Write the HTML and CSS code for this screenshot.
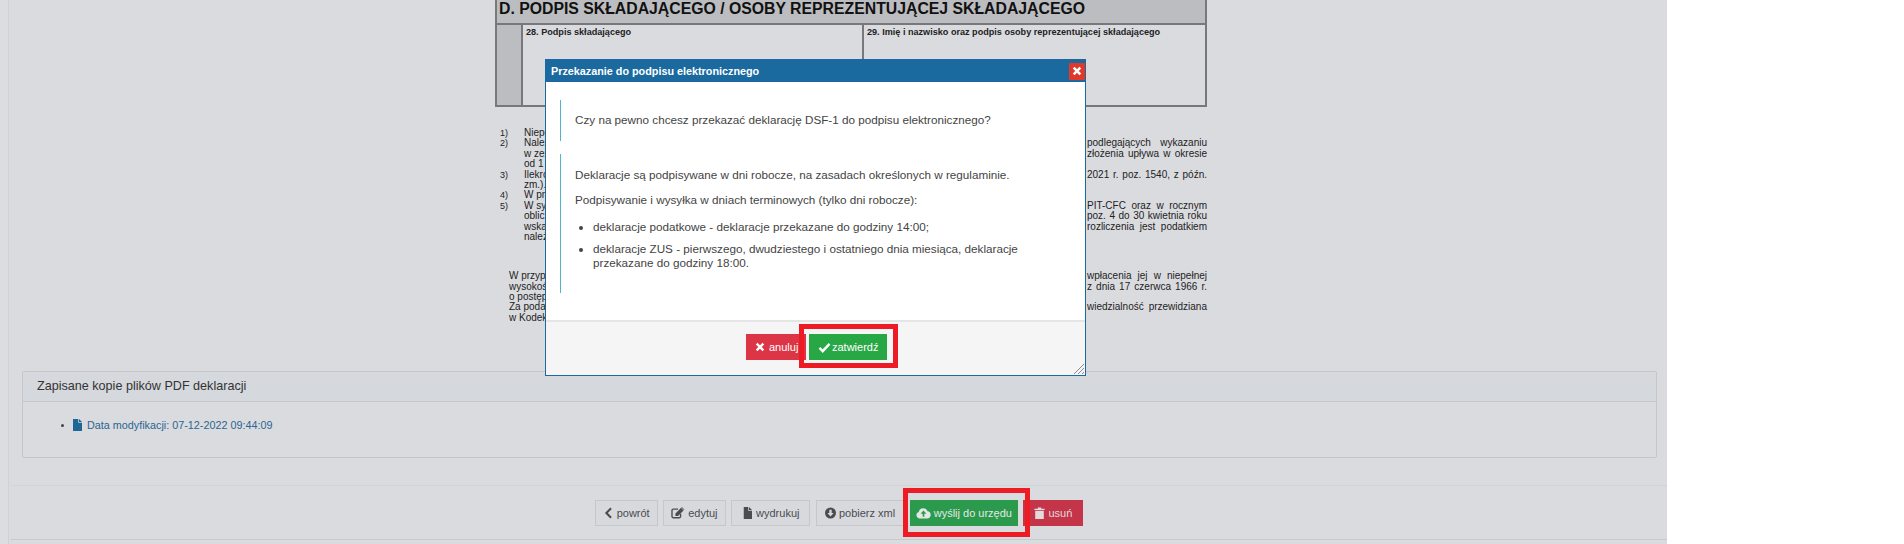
FILE: index.html
```html
<!DOCTYPE html>
<html lang="pl">
<head>
<meta charset="utf-8">
<title>Przekazanie do podpisu elektronicznego</title>
<link rel="stylesheet" href="styles.css">
</head>
<body>
<div class="app">
  <div class="content">
    <div class="rail"></div>
    <main class="main">
      <section class="doc">
        <div class="form">
          <h2 class="form-title">D. PODPIS SKŁADAJĄCEGO / OSOBY REPREZENTUJĄCEJ SKŁADAJĄCEGO</h2>
          <div class="form-body">
            <div class="form-side"></div>
            <div class="form-cell form-cell-a">28. Podpis składającego</div>
            <div class="form-cell">29. Imię i nazwisko oraz podpis osoby reprezentującej składającego</div>
          </div>
        </div>
        <div class="notes">
          <div class="line"><span class="num">1)</span><span class="l">Niepotrzebne skreślić.</span></div>
          <div class="line"><span class="num">2)</span><span class="l">Należy wskazać</span><span class="r">podlegających wykazaniu</span></div>
          <div class="line"><span class="num"></span><span class="l">w zeznaniu</span><span class="r">złożenia upływa w okresie</span></div>
          <div class="line"><span class="num"></span><span class="l">od 1 stycznia</span></div>
          <div class="line"><span class="num">3)</span><span class="l">Ilekroć mowa</span><span class="r">2021 r. poz. 1540, z późn.</span></div>
          <div class="line"><span class="num"></span><span class="l">zm.).</span></div>
          <div class="line"><span class="num">4)</span><span class="l">W przypadku</span></div>
          <div class="line"><span class="num">5)</span><span class="l">W sytuacji</span><span class="r">PIT-CFC oraz w rocznym</span></div>
          <div class="line"><span class="num"></span><span class="l">obliczeniu</span><span class="r">poz. 4 do 30 kwietnia roku</span></div>
          <div class="line"><span class="num"></span><span class="l">wskazanego</span><span class="r">rozliczenia jest podatkiem</span></div>
          <div class="line"><span class="num"></span><span class="l">należnym.</span></div>
          <div class="para">
            <div class="line"><span class="l">W przypadku</span><span class="r">wpłacenia jej w niepełnej</span></div>
            <div class="line"><span class="l">wysokości</span><span class="r">z dnia 17 czerwca 1966 r.</span></div>
            <div class="line"><span class="l">o postępowaniu</span></div>
            <div class="line"><span class="l">Za podanie</span><span class="r">wiedzialność przewidziana</span></div>
            <div class="line"><span class="l">w Kodeksie</span></div>
          </div>
        </div>
      </section>

      <section class="panel">
        <h3 class="panel-head">Zapisane kopie plików PDF deklaracji</h3>
        <ul class="panel-list">
          <li><a class="file-link"><svg class="ico-file" viewBox="0 0 12 16"><path d="M0 0h7v5h5v11H0z"/><path d="M8 0l4 4H8z"/></svg>Data modyfikacji: 07-12-2022 09:44:09</a></li>
        </ul>
      </section>

      <div class="actions">
        <a class="btn btn-plain"><svg class="ico" viewBox="0 0 12 14"><path d="M9 1.500L3.500 7 9 12.500" fill="none" stroke="currentColor" stroke-width="2.400"/></svg>powrót</a>
        <a class="btn btn-plain"><svg class="ico ico-wide" viewBox="0 0 16 14"><path d="M11 8v3a1.500 1.500 0 0 1-1.500 1.500h-7A1.500 1.500 0 0 1 1 11V4a1.500 1.500 0 0 1 1.500-1.500H8" fill="none" stroke="currentColor" stroke-width="1.600"/><path d="M5 7.500L11.500 1l3 3L8 10.500H5zM12.500 0l3 3-.5.5-3-3z"/></svg>edytuj</a>
        <a class="btn btn-plain btn-roomy"><svg class="ico" viewBox="0 0 12 16"><path d="M1 0h6v5h5v11H1z"/><path d="M8 0l4 4H8z"/></svg>wydrukuj</a>
        <a class="btn btn-plain btn-xml"><svg class="ico" viewBox="0 0 14 14"><path fill-rule="evenodd" d="M7 0a7 7 0 1 1 0 14A7 7 0 0 1 7 0zM5.500 3v4H3l4 4.500L11 7H8.500V3z"/></svg>pobierz xml</a>
        <a class="btn btn-send"><svg class="ico ico-cloud" viewBox="0 0 18 14"><path fill-rule="evenodd" d="M4.500 13.500A4 4 0 0 1 3.300 5.700 5.500 5.500 0 0 1 13.800 4.800 4.400 4.400 0 0 1 14 13.500zM9 4L5.500 8H8v3.500h2V8h2.500z"/></svg>wyślij do urzędu</a>
        <a class="btn btn-del"><svg class="ico" viewBox="0 0 12 14"><path d="M0 2h4V.5h4V2h4v1.500H0zM1 4.500h10V14H1z"/></svg>usuń</a>
      </div>
    </main>
  </div>

  <div class="frame frame-modal"></div>

  <div class="modal" role="dialog">
    <header class="modal-head">
      <span>Przekazanie do podpisu elektronicznego</span>
      <span class="modal-close"><svg class="close-ico" viewBox="0 0 12 12"><path d="M2 2l8 8M10 2l-8 8" fill="none" stroke="#fff" stroke-width="3"/></svg></span>
    </header>
    <div class="modal-body">
      <div class="callout callout-a">Czy na pewno chcesz przekazać deklarację DSF-1 do podpisu elektronicznego?</div>
      <div class="callout callout-b">
        <p>Deklaracje są podpisywane w dni robocze, na zasadach określonych w regulaminie.</p>
        <p>Podpisywanie i wysyłka w dniach terminowych (tylko dni robocze):</p>
        <ul>
          <li>deklaracje podatkowe - deklaracje przekazane do godziny 14:00;</li>
          <li>deklaracje ZUS - pierwszego, dwudziestego i ostatniego dnia miesiąca, deklaracje przekazane do godziny 18:00.</li>
        </ul>
      </div>
    </div>
    <footer class="modal-foot">
      <a class="mbtn mbtn-cancel"><svg class="mico" viewBox="0 0 12 12"><path d="M2 2l8 8M10 2l-8 8" fill="none" stroke="currentColor" stroke-width="2.800"/></svg>anuluj</a>
      <a class="mbtn mbtn-ok"><svg class="mico mico-check" viewBox="0 0 14 12"><path d="M1.500 6.500l3.500 3.500 7.500-8" fill="none" stroke="currentColor" stroke-width="2.600"/></svg>zatwierdź</a>
      <svg class="grip" viewBox="0 0 12 12"><path d="M11 1L1 11M11 5l-6 6M11 9l-2 2" fill="none" stroke="#8b8b8b" stroke-width="1"/></svg>
    </footer>
  </div>

  <div class="frame frame-send"></div>
</div>
</body>
</html>
```
FILE: styles.css
```css
* { box-sizing: border-box; }
html, body { margin: 0; padding: 0; background: #fff; }
body { font-family: "Liberation Sans", Arial, sans-serif; color: #333; }

.app { position: relative; width: 1904px; height: 544px; overflow: hidden; background: #fff; }
.content { display: flex; width: 1667px; height: 544px; background: #dadbdf; }
.rail { flex: 0 0 9px; background: #dcdde1; border-right: 1px solid #d0d1d5; }
.main { flex: 1; min-width: 0; }

/* scanned declaration */
.doc { margin-left: 486px; width: 712px; height: 371px; color: #222; }
.form { height: 107px; border: 2px solid #77787b; border-top: 0; }
.form-title { margin: 0; height: 25px; padding: 0 0 0 2px; background: #bcbdc0; border-bottom: 2px solid #77787b; font-size: 15.800px; line-height: 17px; font-weight: 700; color: #111; white-space: nowrap; }
.form-body { display: grid; grid-template-columns: 26px 341px 1fr; height: 80px; }
.form-side { background: #bcbdc0; border-right: 2px solid #77787b; }
.form-cell { padding: 2px 0 0 3px; font-size: 9.100px; line-height: 10px; font-weight: 700; color: #222; white-space: nowrap; }
.form-cell-a { border-right: 2px solid #77787b; }

.notes { padding-top: 21px; font-size: 10px; line-height: 10.400px; }
.line { display: flex; justify-content: space-between; height: 10.400px; white-space: nowrap; }
.num { flex: 0 0 29px; padding-left: 5px; font-size: 9px; }
.l { flex: 1; }
.r { flex: 0 0 120px; text-align: justify; text-align-last: justify; white-space: normal; }
.para { margin-top: 29px; padding-left: 14px; }

/* saved files panel */
.panel { margin: 0 10px 0 13px; height: 87px; border: 1px solid #c5c6ca; border-radius: 2px; }
.panel-head { margin: 0; height: 30px; padding: 0 14px; background: #d5d8dc; border-bottom: 1px solid #c5c6ca; font-size: 12.600px; font-weight: 400; line-height: 29px; color: #333; }
.panel-list { margin: 0; padding: 16px 0 0 38px; font-size: 10.800px; line-height: 14px; list-style: none; }
.panel-list li { display: flex; align-items: center; gap: 9px; }
.panel-list li::before { content: ""; width: 3px; height: 3px; border-radius: 50%; background: #444; }
.file-link { display: inline-flex; align-items: center; color: #2a6592; }
.ico-file { width: 9px; height: 12px; margin-right: 5px; fill: #1d6696; }

/* action bar */
.actions { display: flex; justify-content: center; gap: 5.500px; margin: 27px 0 0 2px; height: 55px; padding-top: 14px; border-top: 1px solid #d2d3d7; border-bottom: 1px solid #c9cace; }
.btn { display: inline-flex; align-items: center; height: 26px; padding: 0 7px; border: 1px solid #c6c7cb; font-size: 11px; white-space: nowrap; }
.btn-roomy { padding: 0 10px; }
.btn-xml { padding: 0 8px; }
.btn-plain { background: #d8d9dd; color: #4a4c51; }
.btn-send { padding: 0 5px; background: #2b9a4c; border-color: #2b9a4c; color: #e2e8e6; }
.btn-del { padding: 0 10px; background: #c43549; border-color: #c43549; color: #e2dadd; }
.ico { width: 11px; height: 12px; margin-right: 3px; fill: currentColor; flex: none; }
.ico-wide { width: 14px; }
.ico-cloud { width: 15px; }

/* modal */
.modal { position: absolute; left: 545px; top: 59px; display: flex; flex-direction: column; width: 541px; height: 317px; background: #fff; border: 1px solid #1a6aa0; }
.modal-head { display: flex; justify-content: space-between; align-items: center; flex: 0 0 22px; padding: 0 0 0 5px; background: #1a6aa0; color: #fff; font-size: 10.800px; font-weight: 700; }
.modal-close { display: flex; align-items: center; justify-content: center; width: 16px; height: 17px; background: #e0392b; }
.close-ico { width: 10px; height: 10px; }
.modal-body { flex: 1; padding: 18px 0 0 14px; font-size: 11.700px; line-height: 14px; color: #444; }
.callout { width: 510px; border-left: 1px solid #53b4cf; padding-left: 14px; }
.callout-a { height: 41px; padding-top: 13px; }
.callout-b { height: 139px; margin-top: 13px; padding-top: 14px; }
.callout p { margin: 0 0 11px; }
.callout ul { margin: 13px 0 0; padding-left: 18px; }
.callout li { margin-bottom: 8px; }
.modal-foot { position: relative; display: flex; justify-content: center; align-items: flex-start; gap: 3px; flex: 0 0 55px; padding: 12px 0 0 2px; background: #f5f5f5; border-top: 2px solid #e5e5e5; }
.mbtn { display: inline-flex; align-items: center; height: 26px; font-size: 11px; color: #fff; white-space: nowrap; }
.mbtn-cancel { width: 60px; padding-left: 9px; background: #dc3545; }
.mbtn-ok { width: 78px; padding-left: 9px; background: #28a745; }
.mico { width: 10px; height: 10px; margin-right: 4px; }
.mico-check { width: 13px; height: 11px; margin-right: 1px; }
.grip { position: absolute; right: 0; bottom: 0; width: 12px; height: 12px; }

/* annotation frames drawn over the page */
.frame { position: absolute; border: 5px solid #ed1c24; }
.frame-modal { left: 799px; top: 324px; width: 99px; height: 44px; z-index: 2; }
.frame-send { left: 903px; top: 488px; width: 127px; height: 49px; }
```
